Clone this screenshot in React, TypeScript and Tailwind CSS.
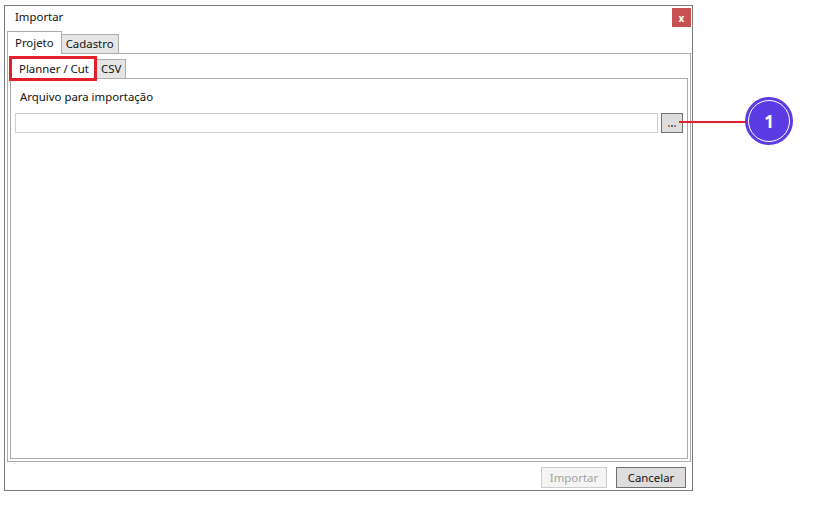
export default function App() {
  return (
    <div
      className="relative w-[836px] h-[506px] bg-white text-[11.4px] text-[#111]"
      style={{ fontFamily: '"Noto Sans", "Open Sans", sans-serif' }}
    >
      {/* dialog window */}
      <div className="ml-[4px] pt-[5px]">
        <div className="w-[689px] h-[486px] border border-[#7a7a7a] flex flex-col">
          {/* title bar */}
          <div className="h-[25px] flex justify-between">
            <span className="pl-[10px] pt-[2px] leading-[18px]">Importar</span>
            <button className="mt-[2px] mr-[1px] w-[19px] h-[19px] bg-[#c75050] text-white text-[10px] font-bold leading-none flex items-center justify-center">
              x
            </button>
          </div>

          {/* outer tabs */}
          <div className="ml-[2px] mr-[1px] flex flex-col flex-1">
            <div className="flex items-end h-[22px]">
              <div className="h-[23px] -mb-px z-10 bg-white border border-b-0 border-[#acacac] px-[7px] pt-[3px] leading-[16px]">
                Projeto
              </div>
              <div className="h-[19px] bg-[#e5e5e5] border border-b-0 border-l-0 border-[#acacac] px-[4px] leading-[17px]">
                Cadastro
              </div>
            </div>
            <div className="h-[409px] border border-[#acacac] bg-white px-[2px] pb-[2px] flex flex-col">
              {/* inner tabs */}
              <div className="flex items-end h-[24px] pl-[1px]">
                <div className="relative h-[22px] -mb-px z-10 bg-white border border-b-0 border-[#acacac] px-[7px] pt-[3px] leading-[16px]">
                  Planner / Cut
                  <div className="absolute -left-[3px] -top-[2px] -right-[1px] -bottom-[2px] border-[3px] border-[#e3202b]" />
                </div>
                <div className="h-[19px] bg-[#e5e5e5] border border-b-0 border-l-0 border-[#acacac] px-[4px] leading-[17px]">
                  CSV
                </div>
              </div>
              <div className="flex-1 border border-[#acacac] px-[4px]">
                <div className="pl-[5px] pt-[10px] leading-[16px]">Arquivo para importação</div>
                <div className="mt-[8px] flex gap-[3px]">
                  <div className="w-[643px] h-[20px] border border-[#cfcfcf] bg-white" />
                  <button className="w-[22px] h-[20px] bg-[#dddddd] border border-[#707070] flex items-end justify-center pb-[5px] gap-px">
                    <span className="w-[2px] h-[2px] bg-[#c0763a]" />
                    <span className="w-[2px] h-[2px] bg-[#3a6fc0]" />
                    <span className="w-[2px] h-[2px] bg-[#c0763a]" />
                  </button>
                </div>
              </div>
            </div>
          </div>

          {/* footer buttons */}
          <div className="h-[28px] flex justify-end items-start gap-[9px] pt-[5px] pr-[6px]">
            <button className="w-[66px] h-[21px] bg-[#f4f4f4] border border-[#cccccc] text-[#a3a3a3] leading-[18px]">
              Importar
            </button>
            <button className="w-[70px] h-[21px] bg-[#dddddd] border border-[#707070] leading-[18px]">
              Cancelar
            </button>
          </div>
        </div>
      </div>

      {/* callout annotation */}
      <div className="absolute left-[679px] top-[121px] w-[68px] h-[2px] bg-[#e3202b]" />
      <div className="absolute left-[745px] top-[97px] w-[48px] h-[48px] rounded-full bg-[#5b3ce4] flex items-center justify-center">
        <div className="w-[42px] h-[42px] rounded-full border-[1.5px] border-white flex items-center justify-center">
          <span className="text-white font-bold text-[17px] leading-none">1</span>
        </div>
      </div>
    </div>
  );
}
